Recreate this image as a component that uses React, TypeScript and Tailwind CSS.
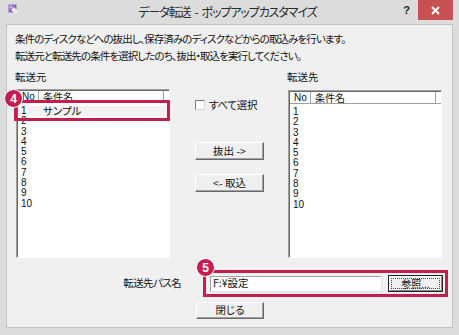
import React from "react";

function AppIcon() {
  return (
    <svg width="10" height="10" viewBox="0 0 10 10">
      <rect x="0.5" y="0.5" width="8" height="8" fill="#8a63b8" />
      <rect x="1.5" y="1.5" width="3" height="3" fill="#c9b6e4" />
      <path d="M3 6 L6 9 L9 9 L9 6 L6 3 Z" fill="#ffffff" opacity="0.85" />
    </svg>
  );
}

function WinButton({ label, w, h }: { label: string; w: string; h: string }) {
  return (
    <div
      className={
        "flex items-center justify-center bg-[#f0f0f0] border border-t-[#ffffff] border-l-[#ffffff] border-r-[#696969] border-b-[#696969] shadow-[inset_-1px_-1px_0_#a0a0a0] text-[10.5px] leading-none text-[#111] " +
        w +
        " " +
        h
      }
    >
      {label}
    </div>
  );
}

const nums = ["1", "2", "3", "4", "5", "6", "7", "8", "9", "10"];

function ListView({ left }: { left: boolean }) {
  return (
    <div className="w-[154px] h-full border border-t-[#a0a0a0] border-l-[#a0a0a0] border-r-[#ffffff] border-b-[#ffffff]">
      <div className="w-full h-full border-t border-l border-t-[#696969] border-l-[#696969] bg-white flex flex-col overflow-hidden">
        <div className="h-[12px] flex items-stretch border-b border-[#a0a0a0] text-[10px] leading-[11px] text-[#111] shrink-0">
          <div className="w-[21px] pl-[4px] border-r border-[#a0a0a0] font-['Liberation_Sans',sans-serif]">No</div>
          <div className="w-[125px] pl-[4px] border-r border-[#a0a0a0]">条件名</div>
          <div className="flex-1" />
        </div>
        <div className="pt-[3px] flex flex-col text-[10px] text-[#111]">
          {nums.map((n) => (
            <div
              key={n}
              className={
                left && n === "1"
                  ? "h-[10.3px] leading-[10.3px] flex bg-[#f2f2f2]"
                  : "h-[10.3px] leading-[10.3px] flex"
              }
            >
              <div className="w-[21px] pl-[3px] font-['Liberation_Sans',sans-serif]">{n}</div>
              {left && n === "1" ? <div className="pl-[4px] text-[10.5px]">サンプル</div> : null}
            </div>
          ))}
        </div>
      </div>
    </div>
  );
}

export default function App() {
  return (
    <div className="w-[459px] h-[335px] bg-[#dcdcdc] flex flex-col font-['Noto_Sans_CJK_JP',sans-serif] [font-feature-settings:'palt'] text-[#111] overflow-hidden">
      {/* title bar */}
      <div className="h-[24px] grid grid-cols-[1fr_auto_1fr] items-start shrink-0">
        <div className="pl-[8px] pt-[4px]">
          <AppIcon />
        </div>
        <div className="pt-[4px] pr-[4px] text-[12px] tracking-[-1.1px] leading-[16px] text-[#2b2b2b] flex">
          <span>データ転送</span>
          <span className="mx-[4px]">-</span>
          <span>ポップアップカスタマイズ</span>
        </div>
        <div className="flex justify-end items-start pr-[6px]">
          <span className="mt-[3px] mr-[8px] text-[11px] font-bold leading-[14px] text-[#222] font-['Liberation_Sans',sans-serif]">
            ?
          </span>
          <div className="w-[35px] h-[20px] bg-[#c75050] flex items-center justify-center">
            <svg width="9" height="9" viewBox="0 0 9 9">
              <path d="M1 1 L8 8 M8 1 L1 8" stroke="#ffffff" strokeWidth="2" />
            </svg>
          </div>
        </div>
      </div>

      {/* client area */}
      <div className="ml-[6px] w-[447px] h-[304px] border border-[#c4c4c4] bg-[#f0f0f0] flex flex-col shrink-0">
        <div className="pl-[8px] pt-[5px] text-[10.5px] tracking-[-0.9px] leading-[17px] text-[#111]">
          <div>条件のディスクなどへの抜出し、保存済みのディスクなどからの取込みを行います。</div>
          <div>転送元と転送先の条件を選択したのち、抜出・取込を実行してください。</div>
        </div>

        <div className="mt-[6px] h-[14px] flex text-[10.5px] leading-[14px]">
          <div className="w-[280px] pl-[8px]">転送元</div>
          <div>転送先</div>
        </div>

        <div className="mt-[5px] pl-[9px] flex items-start">
          {/* left list with overlays */}
          <div className="relative w-[154px] h-[169px]">
            <ListView left={true} />
            <div className="absolute left-[-2px] top-[11px] w-[156px] h-[21px] border-[3px] border-[#c41e4f]" />
            <div className="absolute left-[-12px] top-[0px] w-[19px] h-[19px] rounded-full bg-[#c41e4f] border-[1.5px] border-white flex items-center justify-center text-white font-bold text-[12px] leading-none font-['Liberation_Sans',sans-serif]">
              4
            </div>
          </div>

          {/* center column */}
          <div className="w-[118px] flex flex-col">
            <div className="mt-[10px] h-[12px] pl-[25px] flex items-center gap-[4px] text-[10.5px] tracking-[-0.3px] leading-none">
              <div className="w-[10px] h-[10px] bg-white border border-t-[#7a7a7a] border-l-[#7a7a7a] border-r-[#d8d8d8] border-b-[#d8d8d8]" />
              <span>すべて選択</span>
            </div>
            <div className="mt-[31px] ml-[25px]">
              <WinButton label="抜出 ->" w="w-[69px]" h="h-[18px]" />
            </div>
            <div className="mt-[14px] ml-[25px]">
              <WinButton label="<- 取込" w="w-[69px]" h="h-[18px]" />
            </div>
          </div>

          {/* right list */}
          <div className="mt-[1px] w-[154px] h-[168px]">
            <ListView left={false} />
          </div>
        </div>

        {/* path row */}
        <div className="mt-[12px] pl-[9px] flex items-center">
          <div className="w-[165px] text-right text-[10.5px] tracking-[-0.6px] leading-none">転送先パス名</div>
          <div className="relative ml-[22px] w-[245px] h-[27px] border-[3px] border-[#c41e4f] flex items-center pl-[4px]">
            <div className="w-[172px] h-[16px] bg-white border border-t-[#a0a0a0] border-l-[#a0a0a0] border-r-[#e3e3e3] border-b-[#e3e3e3] flex items-center pl-[2px] text-[10.5px] leading-none">
              F:¥設定
            </div>
            <div className="ml-[6px] w-[55px] h-[17px] border border-[#222] bg-[#f0f0f0] flex items-center justify-center">
              <div className="w-full h-full border border-t-[#ffffff] border-l-[#ffffff] border-r-[#8a8a8a] border-b-[#8a8a8a] flex items-center justify-center p-[1px]">
                <div className="w-full h-full border border-dotted border-[#444] flex items-center justify-center text-[10px] leading-none">
                  参照...
                </div>
              </div>
            </div>
            <div className="absolute left-[-10px] top-[-15px] w-[19px] h-[19px] rounded-full bg-[#c41e4f] border-[1.5px] border-white flex items-center justify-center text-white font-bold text-[12px] leading-none font-['Liberation_Sans',sans-serif]">
              5
            </div>
          </div>
        </div>

        {/* close */}
        <div className="mt-[5px] pl-[189px]">
          <WinButton label="閉じる" w="w-[68px]" h="h-[17px]" />
        </div>
      </div>
    </div>
  );
}
